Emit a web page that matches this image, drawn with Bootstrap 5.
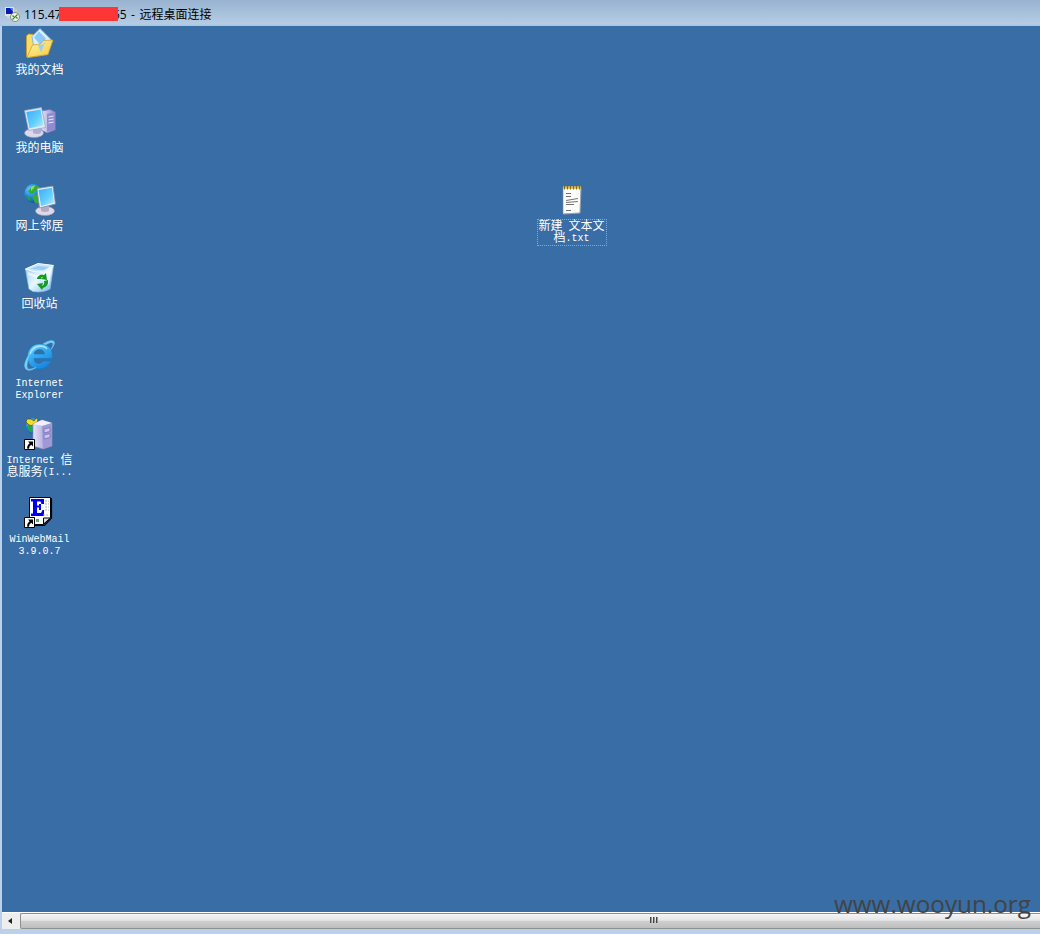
<!DOCTYPE html>
<html lang="zh-CN">
<head>
<meta charset="utf-8">
<title>远程桌面连接</title>
<link href="https://cdn.jsdelivr.net/npm/bootstrap@5.3.0/dist/css/bootstrap.min.css" rel="stylesheet">
<style>
body{width:1040px;height:934px;overflow:hidden;background:#b9d1ea;font-family:"Liberation Sans","Noto Sans CJK SC",sans-serif}
.titlebar{height:26px;background:linear-gradient(#98b3d0,#b5cce5 92%,#a9c3df);padding:3px 0 0 5px;color:#000;font:12px/23px "Open Sans","Noto Sans CJK SC",sans-serif}
.titlebar svg{margin-right:4px;margin-bottom:1px;flex:none}
.ip-a{width:35px}
.redact{width:59px;height:14px;background:#fe3636;margin-bottom:1px;z-index:1}
.ip-b{margin-left:-5px;width:14px}
.conn{margin-left:4px;word-spacing:1.5px}
.desktop{height:886px;margin-left:2px;background:#386da5}
.shortcuts{width:75px;padding-top:2px}
.item{width:75px;height:78px;color:#fff;font:12px/12px "Liberation Mono","Noto Sans CJK SC",monospace;text-align:center;white-space:nowrap}
.item svg{width:32px;height:32px;flex:none;margin-bottom:5px}
.en{font-family:"Liberation Mono",monospace;font-size:10px}
.item div.en{padding-top:1px}
.item span.en{vertical-align:1px;line-height:10px}
.newfile{left:532px;top:158px}
.item .focusbox{width:70px;height:27px;border:1px dotted #8ea9bd;padding-top:1px;margin-top:-2px}
.hscroll{height:17px;margin-left:2px;background:#eeeeee;border-top:1px solid #fff}
.arrow{width:18px;height:16px;padding:0 2px 1px 0}
.thumb{height:16px;border:1px solid #8f8f8f;border-right:0;border-radius:2px 0 0 2px;background:linear-gradient(#f5f5f5,#e6e6e6 45%,#cfcfcf 50%,#bebebe)}
.grip{left:628px;top:2px}
.watermark{right:9px;top:887px;font:24.3px/34px "Open Sans",sans-serif;color:#434343}
</style>
</head>
<body class="position-relative">
<header class="titlebar d-flex align-items-center">
<svg width="15" height="16" viewBox="0 0 15 16"><path d="M0 1h9v9H0z" fill="#e4e3d5"/><path d="M1 2h7v6H1z" fill="#0b18b8"/><path d="M5 2h3v4z" fill="#4f84ef"/><path d="M9 2l3 1v7H9z" fill="#c9c7b0"/><path d="M2 10h6v2H2z" fill="#d4d4cb"/><circle cx="10" cy="11" r="4.500" fill="#eef1e9" stroke="#858c82"/><path d="M7.500 9.500l2 2-2 2M12.500 8.500l-2 2 2 2" fill="none" stroke="#378c24" stroke-width="1.200"/></svg>
<span class="ip-a">115.47</span><span class="redact position-relative"></span><span class="ip-b">55</span><span class="conn">- 远程桌面连接</span>
</header>
<main class="desktop position-relative">
<svg width="0" height="0" class="position-absolute"><defs>
<linearGradient id="scr" x2="1" y2="1"><stop stop-color="#35aef9"/><stop offset=".55" stop-color="#62cdfd"/><stop offset="1" stop-color="#b4f0fd"/></linearGradient>
<linearGradient id="fold" x2="1" y2="1"><stop stop-color="#fff6a8"/><stop offset="1" stop-color="#f8c93c"/></linearGradient>
<linearGradient id="tower" x2="1"><stop stop-color="#e5e3f7"/><stop offset="1" stop-color="#8c87cf"/></linearGradient>
<radialGradient id="globe" cx=".3" cy=".3" r=".8"><stop stop-color="#6ccbfb"/><stop offset=".5" stop-color="#1b83dc"/><stop offset="1" stop-color="#0c47ac"/></radialGradient>
<linearGradient id="bin" x2="1" y2="1"><stop stop-color="#8fc9f4"/><stop offset=".5" stop-color="#e8f7ff"/><stop offset="1" stop-color="#6fb3e8"/></linearGradient>
<linearGradient id="ie" x2=".6" y2="1"><stop stop-color="#8fe1ff"/><stop offset=".45" stop-color="#38aef2"/><stop offset="1" stop-color="#1983dc"/></linearGradient>
<g id="lnk"><path d="M.5 21.500h10v10H.5z" fill="#fff" stroke="#000"/><path d="M4 23.500h5v5l-1.700-1.700q-2.300 1-2.300 4H3.200q-.5-3.500 2.400-5.600z" fill="#000"/></g>
</defs></svg>
<div class="shortcuts d-flex flex-column">
<div class="item d-flex flex-column align-items-center">
<svg viewBox="0 0 32 32"><path d="M2.500 8l2-2 5 .5 2 2 12 2 .5 16-20 3-1.500-1z" fill="#fbdc66" stroke="#d49c20" stroke-width=".8"/><path d="M8 8.500L16 .500l11 11-7 12-10-3z" fill="#d9f0fe" stroke="#74afe3" stroke-width=".8"/><path d="M15 3.500l7 7-5 7-7-8z" fill="#8cc8f8"/><path d="M3 29.500L8.500 17l8-1 3-3.500 9.500-.5-5 14.500z" fill="url(#fold)" stroke="#d19f2c" stroke-width=".8"/><path d="M14 17l5-.5 3-4-5 12z" fill="#9bcef5"/></svg>
<div>我的文档</div></div>
<div class="item d-flex flex-column align-items-center">
<svg viewBox="0 0 32 32"><path d="M17 5l9-1.500 5.500 2.500v18L23 27l-6-3z" fill="url(#tower)" stroke="#7470b9" stroke-width=".7"/><path d="M23 8l8-1.500v17L23 26z" fill="#8f8cd1"/><path d="M24.500 11l5-1M24.500 14l5-1M24.500 17l5-1" stroke="#e5e4fa" stroke-width="1.200"/><ellipse cx="10" cy="27" rx="9.500" ry="4.500" fill="#dcd9ed" stroke="#9c97b8" stroke-width=".6"/><path d="M9 21l8-1v7q-4 2-8 0z" fill="#b1acd1"/><path d="M.5 4.500L17.500 1.500l4 20-17 3z" fill="#e7e7f4" stroke="#88a5c4" stroke-width=".7"/><path d="M2.300 6L16.500 3.500l3 16-14 2.800z" fill="url(#scr)"/></svg>
<div>我的电脑</div></div>
<div class="item d-flex flex-column align-items-center">
<svg viewBox="0 0 32 32"><circle cx="10" cy="9.500" r="9.700" fill="url(#globe)"/><path d="M8 3l4-2 4 2-1 3-4 1-2 3-3 0-2-3zM11 10l4 2v7l-4 0-3-6z" fill="#36ad31"/><path d="M2 11l4 2 1 4-3-1z" fill="#2d9d3a"/><path d="M7 3l4-2-1 3-3 3z" fill="#90df51"/><ellipse cx="21" cy="27" rx="9.500" ry="4.500" fill="#ded9e8" stroke="#a39cad" stroke-width=".6"/><path d="M17 21l8-1v7q-4 2-8 0z" fill="#b3abc4"/><path d="M13 4.500L29 2l2.500 18L15.500 24z" fill="#eaedf5" stroke="#808ba9" stroke-width=".8"/><path d="M14.500 6L28 3.800l2 15-13 3.200z" fill="url(#scr)"/></svg>
<div>网上邻居</div></div>
<div class="item d-flex flex-column align-items-center">
<svg viewBox="0 0 32 32"><path d="M1.500 7L14 2l15.500 1.500L26 27q-7 4-17 2.500L5 27z" fill="url(#bin)" stroke="#8cc6ed" stroke-width=".7"/><path d="M1.500 7L14 1.500l15.500 2-10 6.500q-9 1-18-3z" fill="#c9e8fb" stroke="#f4fcff"/><path d="M6 7l8-3 11 1-6 3z" fill="#9bcdf2"/><path d="M4 10q7 4 15 2l9-6-3 17q-8-6-21-10z" fill="#fff" opacity=".6"/><path d="M13 16q3-5 7-3l2-2 1 7-6-1 2-2q-2-.5-2 2h-4zM24 18q1 6-5 8l-1 2-5-6 6-1-1 3q3-1 2-5z" fill="#159b22"/></svg>
<div>回收站</div></div>
<div class="item d-flex flex-column align-items-center">
<svg viewBox="0 0 32 32"><path d="M16 4C8 4 3.500 10 3.500 17S8 29 15 29c6 0 10-3 12-8h-8q-1.500 2.500-4 2.500c-3 0-5-1.500-5-5h18C30 9 24 4 16 4zm-6 10q1-4.500 5.500-4.500T20.500 14z" fill="url(#ie)" fill-rule="evenodd" stroke="#1679c3" stroke-width=".6"/><path d="M22 4.500q6-3.500 7-1 .7 2-2 6 5-6.500 2.500-8.500Q26-.5 19 4zM6 13Q-2 25 2 29q3 3 10-1.500-7 3-8.500 1Q1.500 26 6 13z" fill="#7cd8fb" stroke="#64c2ee" stroke-width=".8"/><path d="M6 14q3-7.500 10-8 5 0 7 3" fill="none" stroke="#a8e8ff" stroke-width="1.300"/></svg>
<div class="en">Internet<br>Explorer</div></div>
<div class="item d-flex flex-column align-items-center">
<svg viewBox="0 0 32 32"><circle cx="10" cy="8" r="8" fill="url(#globe)"/><path d="M3 8l4-1 2 4-1 4-3-2z" fill="#26a744"/><path d="M3 1l4 0 3 2 2-3-2-1 4 2-1 4-4 1 1 2-5-1-3-3z" fill="#f0df27" stroke="#524f08" stroke-width=".7"/><path d="M9 6l9-4 10 3v23l-9 3-10-3z" fill="url(#tower)" stroke="#8c86bd" stroke-width=".7"/><path d="M9 6l9-4 10 3-9 3z" fill="#f1effc"/><path d="M18 8l10-3v23l-9 3z" fill="#9e98d4"/><path d="M20 11l6-1.500v4L20 15zM20 17l6-1.500v4L20 21z" fill="#c9c5ec" stroke="#7770b7" stroke-width=".8"/><use href="#lnk"/></svg>
<div><span class="en">Internet </span>信<br>息服务<span class="en">(I...</span></div></div>
<div class="item d-flex flex-column align-items-center">
<svg viewBox="0 0 32 32"><path d="M5.500 1.500h21v20l-7 7h-14z" fill="#fff" stroke="#000"/><path d="M27.500 2v20l-7 7.500H10" fill="none" stroke="#000" stroke-width="1.200"/><path d="M19.500 28v-6h7z" fill="#ddd" stroke="#000"/><path d="M7 3h13v5h-2.500l-1-2.500H13v4h2V8h2v6h-2v-2.500h-2V17h4l1.500-3H20v6H7v-2.500h2v-12H7z" fill="#0000ee"/><path d="M21 5h4M21 8h4M21 11h4M21 14h4M19 19h5" stroke="#aaa" stroke-dasharray="2 1"/><path d="M12 23h3v3h-3z" fill="#5eac6c"/><use href="#lnk"/></svg>
<div class="en">WinWebMail<br>3.9.0.7</div></div>
</div>
<div class="item newfile position-absolute d-flex flex-column align-items-center">
<svg viewBox="0 0 32 32"><path d="M7 3.500l18-.5-1 26-17 1z" fill="#fdfdfb" stroke="#868e98" stroke-width=".6"/><path d="M25 5l-1 24-16 1" fill="none" stroke="#a0a9b3" stroke-width=".7"/><path d="M7 3.500h18" stroke="#d8b94a" stroke-width="2.500"/><path d="M8.500 2v3.500M11.500 2v3.500M14.500 2v3.500M17.500 2v3.500M20.500 2v3.500M23.500 2v3.500" stroke="#8b6b1a"/><path d="M10 9.500h5M10 12.500h5M10 16.500l12-2M10 18.500l12-1M10 20.500h8M10 26.500h5" stroke="#737373"/></svg>
<div class="focusbox">新建<span class="en"> </span>文本文<br>档<span class="en">.txt</span></div></div>
</main>
<div class="hscroll d-flex">
<div class="arrow d-flex align-items-center justify-content-center"><svg width="6" height="8"><path d="M5 1v6L1 4z" fill="#222"/></svg></div>
<div class="thumb flex-grow-1 position-relative"><svg class="grip position-absolute" width="10" height="8"><path d="M1.500 1v6M4.500 1v6M7.500 1v6" stroke="#444"/><path d="M2.500 1v6M5.500 1v6M8.500 1v6" stroke="#999"/></svg></div>
</div>
<div class="watermark position-absolute">www.wooyun.org</div>
</body>
</html>
